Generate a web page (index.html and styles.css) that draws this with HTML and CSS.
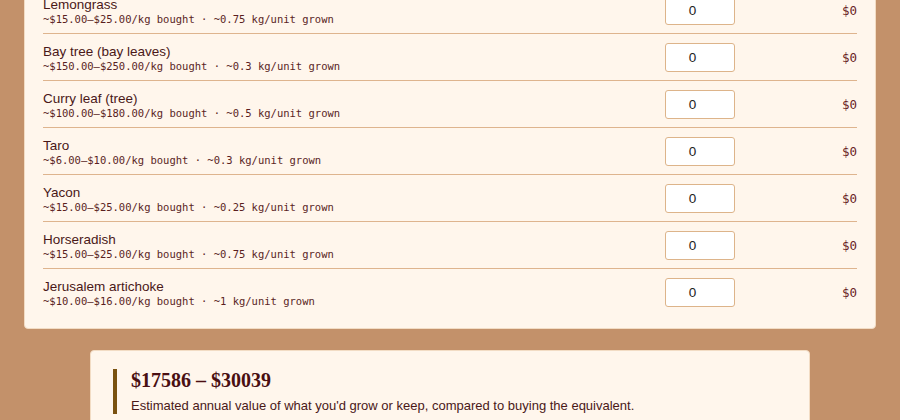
FILE: index.html
```html
<!DOCTYPE html>
<html lang="en">
<head>
<meta charset="utf-8">
<title>Grow or buy</title>
<link rel="stylesheet" href="styles.css">
</head>
<body>
<main class="page">
  <section class="card items">
    <div class="row">
      <div class="info"><div class="name">Lemongrass</div><div class="meta">~$15.00–$25.00/kg bought · ~0.75 kg/unit grown</div></div>
      <input class="qty" type="number" min="0" value="0">
      <div class="val">$0</div>
    </div>
    <div class="row">
      <div class="info"><div class="name">Bay tree (bay leaves)</div><div class="meta">~$150.00–$250.00/kg bought · ~0.3 kg/unit grown</div></div>
      <input class="qty" type="number" min="0" value="0">
      <div class="val">$0</div>
    </div>
    <div class="row">
      <div class="info"><div class="name">Curry leaf (tree)</div><div class="meta">~$100.00–$180.00/kg bought · ~0.5 kg/unit grown</div></div>
      <input class="qty" type="number" min="0" value="0">
      <div class="val">$0</div>
    </div>
    <div class="row">
      <div class="info"><div class="name">Taro</div><div class="meta">~$6.00–$10.00/kg bought · ~0.3 kg/unit grown</div></div>
      <input class="qty" type="number" min="0" value="0">
      <div class="val">$0</div>
    </div>
    <div class="row">
      <div class="info"><div class="name">Yacon</div><div class="meta">~$15.00–$25.00/kg bought · ~0.25 kg/unit grown</div></div>
      <input class="qty" type="number" min="0" value="0">
      <div class="val">$0</div>
    </div>
    <div class="row">
      <div class="info"><div class="name">Horseradish</div><div class="meta">~$15.00–$25.00/kg bought · ~0.75 kg/unit grown</div></div>
      <input class="qty" type="number" min="0" value="0">
      <div class="val">$0</div>
    </div>
    <div class="row">
      <div class="info"><div class="name">Jerusalem artichoke</div><div class="meta">~$10.00–$16.00/kg bought · ~1 kg/unit grown</div></div>
      <input class="qty" type="number" min="0" value="0">
      <div class="val">$0</div>
    </div>
  </section>
  <section class="card summary">
    <div class="result">
      <h2 class="total">$17586 – $30039</h2>
      <p class="note">Estimated annual value of what you'd grow or keep, compared to buying the equivalent.</p>
    </div>
  </section>
</main>
</body>
</html>
```

FILE: styles.css
```css
html, body {
  margin: 0;
  padding: 0;
  background: #c3916a;
  height: 420px;
  overflow: hidden;
}
body {
  font-family: "Liberation Sans", Arial, sans-serif;
  color: #4a1818;
}
.page {
  padding: 0 24px;
  display: flex;
  flex-direction: column;
  align-items: center;
  gap: 21px;
}
.card {
  background: #fff6ec;
  border: 1px solid #f2dcc4;
  border-radius: 4px;
  box-sizing: border-box;
}
.items {
  width: 100%;
  margin-top: -32px;
  padding: 18px 18px 13px;
}
.row {
  display: flex;
  align-items: center;
  height: 46px;
  border-bottom: 1px solid #deb48e;
}
.row:last-child {
  border-bottom: none;
}
.info {
  flex: 1;
  display: flex;
  flex-direction: column;
  padding-top: 2px;
}
.name {
  font-size: 13.5px;
  line-height: 16px;
  color: #4a1818;
}
.meta {
  font-family: "DejaVu Sans Mono", monospace;
  font-size: 10.5px;
  line-height: 13px;
  color: #5a1f1f;
}
.qty {
  width: 70px;
  height: 29px;
  box-sizing: border-box;
  border: 1px solid #ddb48a;
  border-radius: 3px;
  background: #fff;
  text-align: center;
  font-family: "Liberation Sans", Arial, sans-serif;
  font-size: 13.5px;
  color: #222;
  padding: 0 2px;
  margin: 0;
}
.val {
  width: 122px;
  text-align: right;
  font-family: "DejaVu Sans Mono", monospace;
  font-size: 12.5px;
  color: #6a2424;
}
.summary {
  width: 720px;
  padding: 18px 22px 20px;
}
.result {
  border-left: 4px solid #7a5210;
  padding-left: 14px;
}
.total {
  margin: 0;
  font-family: "Liberation Serif", "Times New Roman", serif;
  font-weight: bold;
  font-size: 20px;
  line-height: 22px;
  color: #4a0f12;
}
.note {
  margin: 6px 0 0;
  font-size: 13px;
  line-height: 17px;
  color: #4a1818;
}
```
